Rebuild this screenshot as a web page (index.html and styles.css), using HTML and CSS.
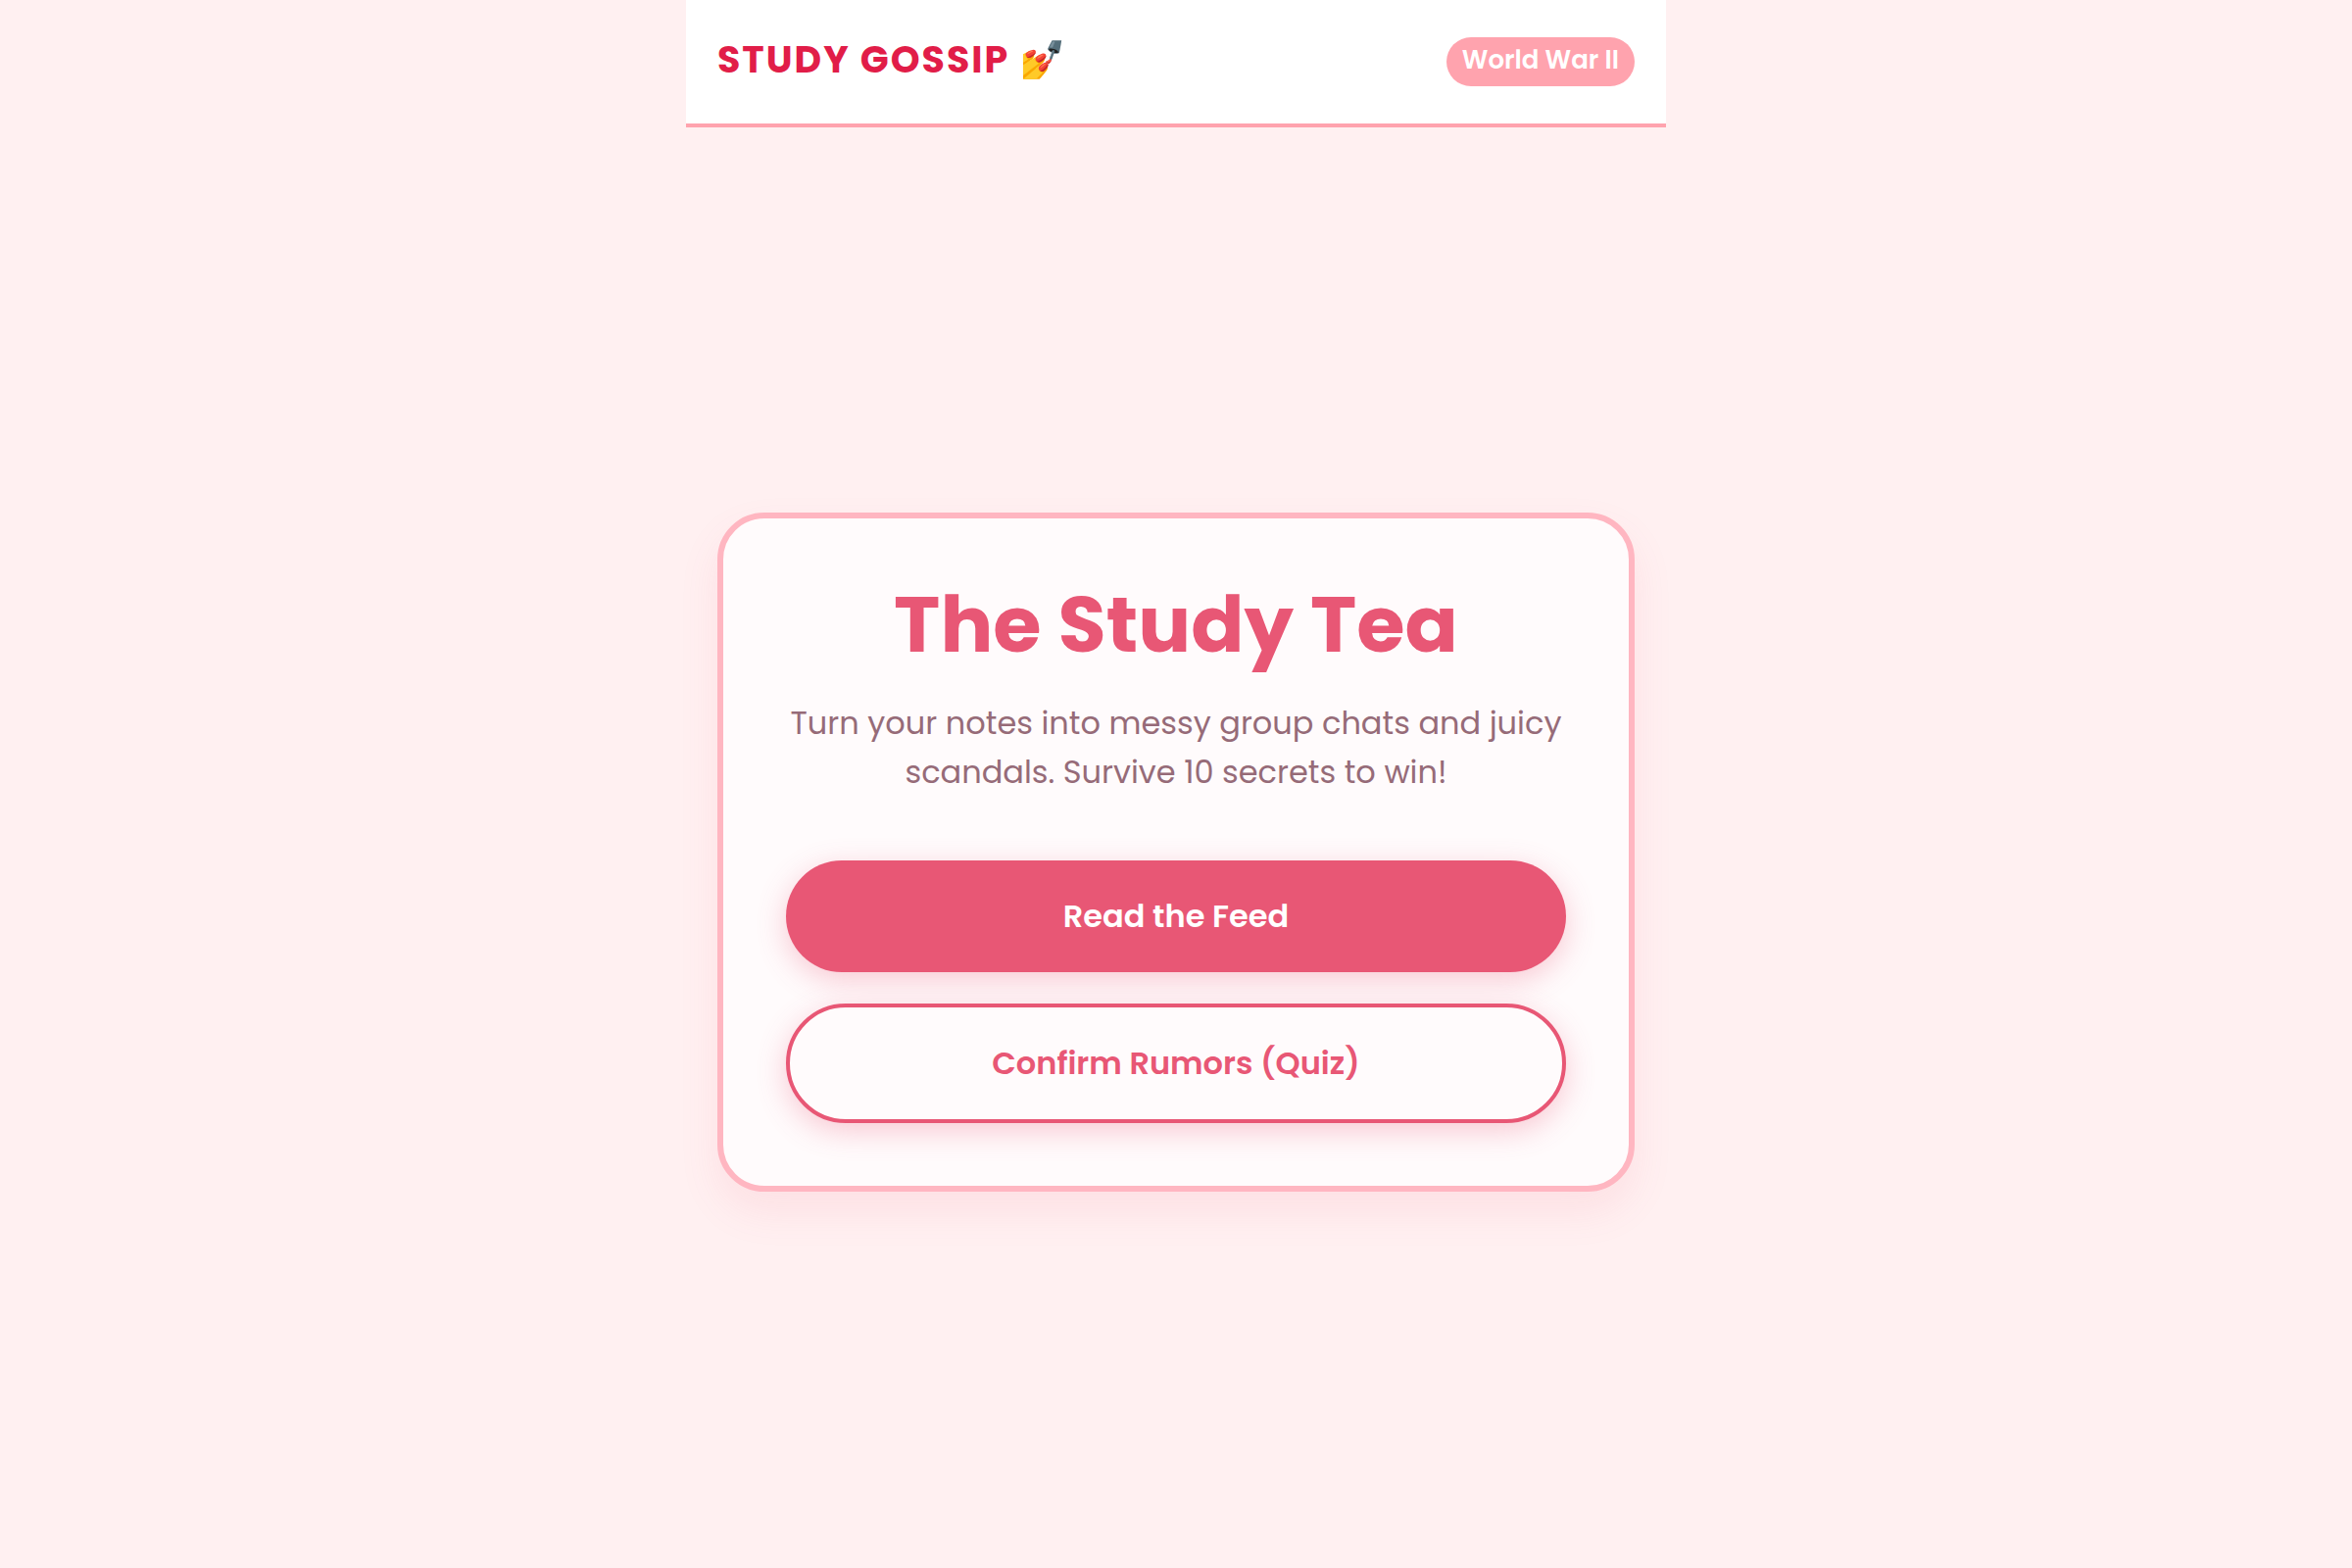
FILE: index.html
```html
<!DOCTYPE html>
<html lang="en">
<head>
    <meta charset="UTF-8">
    <meta name="viewport" content="width=device-width, initial-scale=1.0">
    <title>Study Gossip</title>
    <link rel="stylesheet" href="styles.css">
</head>
<body>

<div class="app">
    <header class="topbar">
        <div class="logo">STUDY GOSSIP 💅</div>
        <span class="topic">World War II</span>
    </header>

    <main class="content">
        <section class="card">
            <h1>The Study Tea</h1>
            <p>Turn your notes into messy group chats and juicy scandals. Survive 10 secrets to win!</p>
            <div class="actions">
                <button type="button" class="btn btn-primary">Read the Feed</button>
                <button type="button" class="btn btn-outline">Confirm Rumors (Quiz)</button>
            </div>
        </section>
    </main>
</div>

</body>
</html>
```

FILE: styles.css
```css
* {
    box-sizing: border-box;
}

body {
    margin: 0;
    background-color: #fff0f1;
    font-family: Poppins, Inter, sans-serif;
}

.app {
    display: flex;
    flex-direction: column;
    max-width: 1000px;
    min-height: 100vh;
    margin: 0 auto;
}

.topbar {
    display: flex;
    align-items: center;
    justify-content: space-between;
    padding: 32px;
    background-color: #fff;
    border-bottom: 4px solid #ffa3ae;
}

.logo {
    padding-bottom: 4px;
    color: #e11d48;
    font-size: 38px;
    font-weight: 700;
    line-height: 58px;
    letter-spacing: 2px;
}

.topic {
    padding: 4px 16px 8px;
    border-radius: 25px;
    background-color: #ffa3ae;
    color: #fff;
    font-size: 26px;
    font-weight: 600;
    line-height: 38px;
}

.content {
    display: flex;
    flex: 1;
    align-items: center;
    padding: 40px 32px 32px;
}

.card {
    width: 100%;
    padding: 64px;
    border: 6px solid #ffb6c1;
    border-radius: 48px;
    background-color: #fffbfc;
    box-shadow: 0 20px 40px rgba(232, 87, 117, 0.1);
    text-align: center;
}

.card h1 {
    margin: 0 0 32px;
    color: #e85775;
    font-size: 80px;
    font-weight: 700;
    line-height: 88px;
}

.card p {
    margin: 0 0 65px;
    color: #966b78;
    font-size: 32px;
    line-height: 50px;
}

.actions {
    display: flex;
    flex-direction: column;
    gap: 32px;
}

.btn {
    padding: 32px;
    border: none;
    border-radius: 61px;
    box-shadow: 0 8px 30px rgba(232, 87, 117, 0.3);
    font-family: inherit;
    font-size: 32px;
    font-weight: 600;
    line-height: 50px;
    cursor: pointer;
}

.btn-primary {
    background-color: #e85775;
    color: #fff;
}

.btn-outline {
    border: 4px solid #e85775;
    background-color: #fffbfc;
    color: #e85775;
}
```
